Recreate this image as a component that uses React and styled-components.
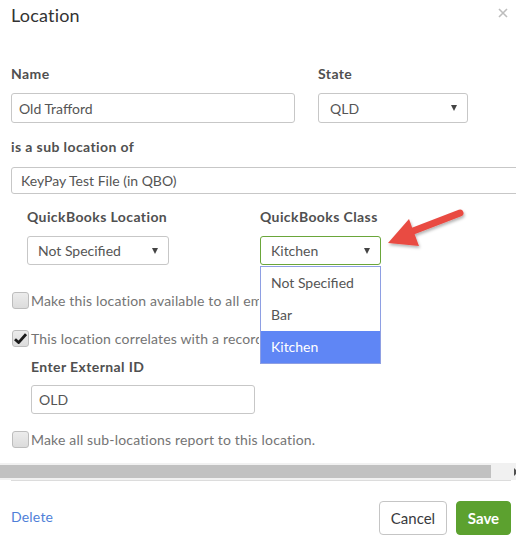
import styled, { createGlobalStyle } from 'styled-components';

const GlobalStyle = createGlobalStyle`
  html, body {
    margin: 0;
    padding: 0;
    background: #fff;
  }
  * {
    box-sizing: border-box;
  }
`;

const Dialog = styled.div`
  position: relative;
  width: 516px;
  height: 540px;
  overflow: hidden;
  background: #fff;
  font-family: Lato, "Liberation Sans", sans-serif;
  color: #555;
`;

const Header = styled.div`
  display: flex;
  align-items: center;
  justify-content: space-between;
  height: 32px;
  padding: 0 7px 0 11px;
`;

const Title = styled.h1`
  margin: -2px 0 0;
  font-size: 18px;
  font-weight: 400;
  letter-spacing: 0.2px;
  color: #333;
`;

const CloseButton = styled.button`
  display: flex;
  align-items: center;
  justify-content: center;
  width: 12px;
  height: 12px;
  padding: 0;
  margin-top: -6px;
  border: none;
  background: none;
  cursor: pointer;
`;

const Body = styled.div`
  padding: 33px 0 0 11px;
`;

const Row = styled.div`
  display: flex;
  gap: ${p => p.$gap || 0}px;
  padding-left: ${p => p.$indent || 0}px;
  margin-top: ${p => p.$top || 0}px;
`;

const Field = styled.div`
  position: relative;
  width: ${p => p.$width}px;
  flex-shrink: 0;
`;

const Label = styled.div`
  height: 18px;
  line-height: 18px;
  font-size: 14px;
  font-weight: 700;
  letter-spacing: 0.4px;
  color: #505050;
  margin-top: ${p => p.$top || 0}px;
  padding-left: ${p => p.$indent || 0}px;
  white-space: nowrap;
`;

const TextInput = styled.div`
  display: flex;
  align-items: center;
  width: ${p => (p.$width ? `${p.$width}px` : '100%')};
  height: ${p => p.$height || 30}px;
  margin-top: ${p => p.$top || 10}px;
  padding-left: ${p => p.$pad || 7}px;
  border: 1px solid #c7c7c7;
  border-radius: 3px;
  font-size: 14px;
  color: #555;
  background: #fff;
  white-space: nowrap;
`;

const Select = styled(TextInput)`
  position: relative;
  border-color: ${p => (p.$focused ? '#6aa63a' : '#c7c7c7')};

  &::after {
    content: '';
    position: absolute;
    right: 10px;
    top: 50%;
    margin-top: -3px;
    border-left: 3.5px solid transparent;
    border-right: 3.5px solid transparent;
    border-top: 6px solid #444;
  }
`;

const Options = styled.ul`
  position: absolute;
  left: 0;
  top: 58px;
  width: 121px;
  margin: 0;
  padding: 0;
  list-style: none;
  background: #fff;
  border: 1px solid #8e9fe3;
  z-index: 2;
`;

const Option = styled.li`
  height: 32px;
  line-height: 32px;
  padding-left: 10px;
  font-size: 14px;
  color: ${p => (p.$active ? '#fff' : '#555')};
  background: ${p => (p.$active ? '#5f86f5' : '#fff')};
`;

const CheckRow = styled.label`
  display: flex;
  align-items: center;
  gap: 2px;
  height: 18px;
  max-width: ${p => (p.$clip ? `${p.$clip}px` : 'none')};
  overflow: hidden;
  margin-top: ${p => p.$top}px;
  padding-left: 1px;
  font-size: 14px;
  letter-spacing: 0.17px;
  color: #747474;
  white-space: nowrap;
`;

const Box = styled.span`
  display: flex;
  align-items: center;
  justify-content: center;
  width: 17px;
  height: 17px;
  flex-shrink: 0;
  border: 1px solid #bdbdbd;
  border-radius: 3px;
  background: linear-gradient(#ececec, #dcdcdc);
`;

const SubSection = styled.div`
  padding-left: 20px;
`;

const ScrollBar = styled.div`
  display: flex;
  align-items: center;
  height: 17px;
  margin: 15px 0 0 -11px;
  background: #f1f1f1;
`;

const Thumb = styled.div`
  width: 491px;
  height: 13px;
  background: #c1c1c1;
`;

const ScrollArrow = styled.div`
  margin-left: auto;
  border-top: 4px solid transparent;
  border-bottom: 4px solid transparent;
  border-left: 4px solid #505050;
  transform: translateX(2px);
`;

const Footer = styled.div`
  display: flex;
  align-items: center;
  justify-content: space-between;
  margin: 0 5px 0 11px;
  padding-top: 20px;
  border-top: 1px solid #dcdcdc;
`;

const DeleteLink = styled.a`
  font-size: 14px;
  letter-spacing: 0.2px;
  color: #4f7fd8;
  text-decoration: none;
  cursor: pointer;
  margin-top: -3px;
`;

const Actions = styled.div`
  display: flex;
  gap: 9px;
`;

const Button = styled.button`
  width: ${p => p.$width}px;
  height: 34px;
  padding: 0;
  border-radius: 4px;
  border: 1px solid ${p => (p.$primary ? '#5ca12f' : '#c5c5c5')};
  background: ${p => (p.$primary ? '#5ca12f' : '#fff')};
  color: ${p => (p.$primary ? '#fff' : '#393a3d')};
  font-family: Lato, "Liberation Sans", sans-serif;
  font-size: 15px;
  font-weight: ${p => (p.$primary ? 700 : 400)};
  cursor: pointer;
`;

const Pointer = styled.svg`
  position: absolute;
  left: 380px;
  top: 200px;
  pointer-events: none;
  z-index: 3;
`;

function Checkbox({ checked, top, clip, children }) {
  return (
    <CheckRow $top={top} $clip={clip}>
      <Box>
        {checked && (
          <svg width="13" height="11" viewBox="0 0 13 11">
            <path d="M1 6.2 L4.6 9.6 L12 1.2" fill="none" stroke="#1a1a1a" strokeWidth="2.8" strokeLinejoin="round" />
          </svg>
        )}
      </Box>
      {children}
    </CheckRow>
  );
}

export default function App() {
  return (
    <Dialog>
      <GlobalStyle />
      <Header>
        <Title>Location</Title>
        <CloseButton aria-label="Close">
          <svg width="10" height="10" viewBox="0 0 10 10">
            <path d="M1 1 L9 9 M9 1 L1 9" stroke="#bdbdbd" strokeWidth="1.6" />
          </svg>
        </CloseButton>
      </Header>

      <Body>
        <Row $gap={23}>
          <Field $width={284}>
            <Label>Name</Label>
            <TextInput>Old Trafford</TextInput>
          </Field>
          <Field $width={150}>
            <Label>State</Label>
            <Select $pad={11}>QLD</Select>
          </Field>
        </Row>

        <Label $top={15}>is a sub location of</Label>
        <TextInput $width={530} $height={27} $top={11} $pad={9}>KeyPay Test File (in QBO)</TextInput>

        <Row $indent={16} $top={14}>
          <Field $width={233}>
            <Label>QuickBooks Location</Label>
            <Select $width={142} $height={29} $pad={10}>Not Specified</Select>
          </Field>
          <Field $width={121}>
            <Label>QuickBooks Class</Label>
            <Select $focused $width={121} $height={29} $pad={10}>Kitchen</Select>
            <Options>
              <Option>Not Specified</Option>
              <Option>Bar</Option>
              <Option $active>Kitchen</Option>
            </Options>
          </Field>
        </Row>

        <Checkbox top={26} clip={248}>Make this location available to all employees.</Checkbox>
        <Checkbox checked top={20} clip={248}>This location correlates with a record in QuickBooks.</Checkbox>

        <SubSection>
          <Label $top={11}>Enter External ID</Label>
          <TextInput $width={224} $height={29} $top={9}>OLD</TextInput>
        </SubSection>

        <Checkbox top={16}>Make all sub-locations report to this location.</Checkbox>

        <ScrollBar>
          <Thumb />
          <ScrollArrow />
        </ScrollBar>
      </Body>

      <Footer>
        <DeleteLink>Delete</DeleteLink>
        <Actions>
          <Button $width={68}>Cancel</Button>
          <Button $primary $width={55}>Save</Button>
        </Actions>
      </Footer>

      <Pointer width="100" height="60" viewBox="0 0 100 60">
        <defs>
          <filter id="drop" x="-20%" y="-20%" width="140%" height="160%">
            <feDropShadow dx="1" dy="2" stdDeviation="1.5" floodColor="#000" floodOpacity="0.3" />
          </filter>
        </defs>
        <g filter="url(#drop)" fill="#e94b43">
          <path d="M80 13 L28 33" stroke="#e94b43" strokeWidth="7" strokeLinecap="round" />
          <path d="M8 43 L29 19 L39 46 Z" />
        </g>
      </Pointer>
    </Dialog>
  );
}
